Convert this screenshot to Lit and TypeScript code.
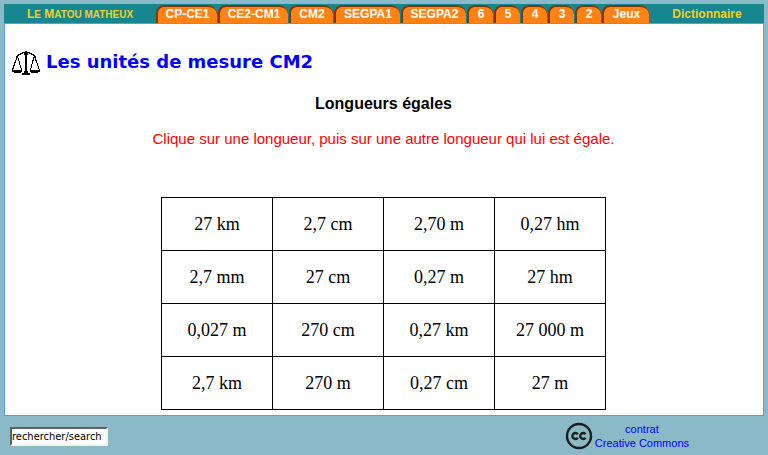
import { LitElement, html, css } from "lit";
import { customElement, state } from "lit/decorators.js";

const TABS = ["CP-CE1", "CE2-CM1", "CM2", "SEGPA1", "SEGPA2", "6", "5", "4", "3", "2", "Jeux"];

const LENGTHS = [
  ["27 km", "2,7 cm", "2,70 m", "0,27 hm"],
  ["2,7 mm", "27 cm", "0,27 m", "27 hm"],
  ["0,027 m", "270 cm", "0,27 km", "27 000 m"],
  ["2,7 km", "270 m", "0,27 cm", "27 m"],
];

@customElement("site-header")
class SiteHeader extends LitElement {
  static styles = css`
    :host { display: block; }
    .bar {
      display: grid;
      grid-template-columns: 4fr auto 3fr;
      height: 19px;
      background: #18868f;
      font: bold 12px/20px "Liberation Sans", Arial, sans-serif;
      text-align: center;
    }
    a { text-decoration: none; white-space: nowrap; }
    .brand { color: #e6d42a; text-transform: uppercase; }
    .small { font-size: 10px; }
    .dico { color: #f5d015; }
    .tabs {
      display: grid;
      grid-template-columns: 62px 71px 45px 67px 66px repeat(5, 27px) 48px;
      padding-top: 1px;
    }
    .tab {
      margin-right: 1px;
      box-sizing: border-box;
      height: 18px;
      line-height: 15px;
      color: #fff;
      background: #ff8214;
      border-top: 2px solid #7c3a0c;
      border-left: 2px solid #7c3a0c;
      border-radius: 8px 9px 0 0;
    }
  `;
  render() {
    return html`<header class="bar">
      <a class="brand" href="#accueil">L<span class="small">e</span> M<span class="small">atou matheux</span></a>
      <nav class="tabs">${TABS.map((t) => html`<a class="tab" href="#${t}">${t}</a>`)}</nav>
      <a class="dico" href="#dictionnaire">Dictionnaire</a>
    </header>`;
  }
}

@customElement("length-table")
class LengthTable extends LitElement {
  @state() selected = "";

  static styles = css`
    :host { display: block; }
    table { border-collapse: collapse; margin: 0 auto; }
    td { border: 1px solid #000; padding: 0; }
    .cell {
      display: block;
      width: 110px;
      height: 52px;
      padding: 0;
      border: 0;
      background: none;
      color: #000;
      font: 18px/20px "Liberation Serif", "Times New Roman", serif;
      cursor: pointer;
    }
    .on { background: #ffe9a8; }
  `;
  render() {
    return html`<table>
      <tbody>
        ${LENGTHS.map((row) => html`<tr>
          ${row.map((v) => html`<td>
            <button class="cell ${this.selected === v ? "on" : ""}" @click=${() => (this.selected = v)}>${v}</button>
          </td>`)}
        </tr>`)}
      </tbody>
    </table>`;
  }
}

@customElement("app-root")
class AppRoot extends LitElement {
  static styles = css`
    :host {
      display: block;
      box-sizing: border-box;
      min-height: 100vh;
      padding: 4px 4px 0;
      background: #8abac8;
      font-family: "Liberation Sans", Arial, sans-serif;
    }
    .page {
      background: #fff;
      border: 1px solid #6495ed;
      padding: 24px 8px 5px 7px;
    }
    .title { display: flex; align-items: center; gap: 6px; height: 30px; }
    .scales { width: 28px; height: 24px; flex: none; }
    h1 {
      margin: 0;
      padding-bottom: 2px;
      color: #00f;
      font: bold 18px/24px Verdana, "DejaVu Sans", sans-serif;
    }
    h2 { margin: 16px 0 0; font-size: 16px; line-height: 20px; text-align: center; }
    .hint { margin: 15px 0 48px; color: #f00; font-size: 15px; line-height: 20px; text-align: center; }
    .foot { display: flex; align-items: center; padding: 6px 75px 0 6px; justify-content: space-between; }
    .search {
      box-sizing: border-box;
      width: 98px;
      height: 19px;
      padding: 1px 0 0;
      margin: 0;
      border: 2px solid;
      border-color: #606060 #f4f2ec #f4f2ec #606060;
      border-radius: 0;
      background: #fff;
      color: #000;
      font: 11px/14px Tahoma, "DejaVu Sans Condensed", sans-serif;
    }
    .licence {
      display: flex;
      align-items: center;
      gap: 2px;
      color: #00f;
      font-size: 11px;
      line-height: 14px;
      text-align: center;
      text-decoration: none;
    }
    .cc { width: 28px; height: 28px; }
  `;
  render() {
    return html`
      <site-header></site-header>
      <main class="page">
        <div class="title">
          <svg class="scales" viewBox="0 0 28 24" shape-rendering="crispEdges" aria-hidden="true">
            <path d="M13 0h2v22h-2zM12 2h4v2h-4zM12 20h4v2h-4zM10 22h8v2h-8z" />
            <path d="M0 19h10v2h-1v1h-7v-1h-2zM18 19h10v2h-2v1h-7v-1h-1z" />
            <path d="M4 5h2v1h-2zM5 4h2v1h-2zM6 3h3v1h-3zM8 2h3v1h-3zM10 1h3v1h-3zM15 1h3v1h-3zM17 2h3v1h-3zM19 3h3v1h-3zM21 4h2v1h-2zM22 5h2v1h-2z" />
            <path fill="none" stroke="#000" d="M5.5 5L3.5 10L0.5 19M5.5 5L7.5 12L9.5 19M22.5 5L20.5 11L18.5 19M22.5 5L24.5 11L27.5 19" />
          </svg>
          <h1>Les unités de mesure CM2</h1>
        </div>
        <h2>Longueurs égales</h2>
        <p class="hint">Clique sur une longueur, puis sur une autre longueur qui lui est égale.</p>
        <length-table></length-table>
      </main>
      <footer class="foot">
        <input class="search" type="text" aria-label="rechercher/search" value="rechercher/search" />
        <a class="licence" href="#licence">
          <svg class="cc" viewBox="0 0 28 28" fill="none" stroke="#1c1c1c" aria-hidden="true">
            <circle cx="14" cy="14" r="12" stroke-width="2.4" />
            <path stroke-width="2.3" d="M12.8 12.2A3 3 0 1 0 12.8 15.8M20.6 12.2A3 3 0 1 0 20.6 15.8" />
          </svg>
          <span>contrat<br />Creative Commons</span>
        </a>
      </footer>
    `;
  }
}
